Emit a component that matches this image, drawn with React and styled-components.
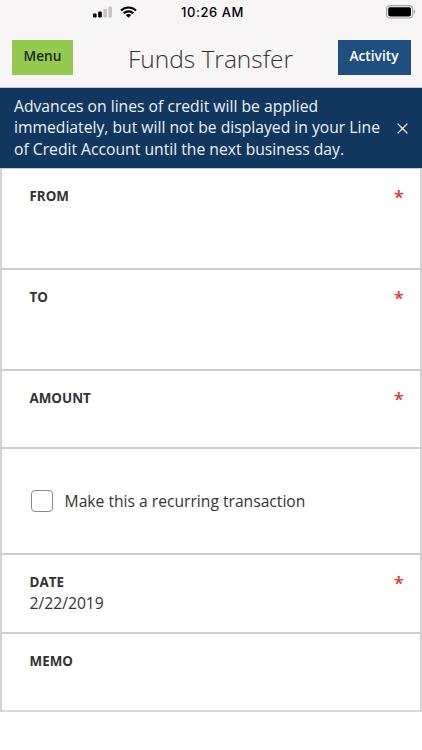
import React, { useState } from "react";
import styled, { createGlobalStyle, css } from "styled-components";

const FONT_STACK_BASE = '"Open Sans", "Noto Sans", sans-serif';
const FONT_STACK_SYSTEM = 'Inter, "Liberation Sans", sans-serif';
const COLOR_CHROME = "#f7f5f6";
const COLOR_GREEN = "#95c94f";
const COLOR_BLUE = "#1f4f80";
const COLOR_NAVY = "#12375f";
const COLOR_KEYLINE = "#cdcdcd";
const COLOR_TEXT = "#333333";
const COLOR_REQUIRED = "#e0392b";
const FONT_SIZE_BODY = "15.7px";

const FIELDS = [
  { label: "FROM", height: 101, required: true },
  { label: "TO", height: 101, required: true },
  { label: "AMOUNT", height: 78, required: true },
  { checkbox: "Make this a recurring transaction", height: 106 },
  { label: "DATE", value: "2/22/2019", height: 79, required: true },
  { label: "MEMO", height: 78 }
];

export default function App() {
  const [noticeOpen, setNoticeOpen] = useState(true);

  return (
    <Screen>
      <GlobalStyle />
      <StatusBar>
        <Signal>
          <SignalIcon />
          <WifiIcon />
        </Signal>
        <Clock>10:26 AM</Clock>
        <BatteryIcon />
      </StatusBar>
      <Header>
        <HeaderButton>Menu</HeaderButton>
        <Title>Funds Transfer</Title>
        <HeaderButton primary>Activity</HeaderButton>
      </Header>
      {noticeOpen && (
        <Notice>
          <NoticeText>
            Advances on lines of credit will be applied immediately, but will
            not be displayed in your Line of Credit Account until the next
            business day.
          </NoticeText>
          <Close aria-label="Close" onClick={() => setNoticeOpen(false)}>
            <CloseIcon />
          </Close>
        </Notice>
      )}
      <Form>
        {FIELDS.map(field =>
          field.checkbox ? (
            <CheckRow key={field.checkbox} height={field.height}>
              <Checkbox type="checkbox" />
              {field.checkbox}
            </CheckRow>
          ) : (
            <Field key={field.label} {...field} />
          )
        )}
      </Form>
    </Screen>
  );
}

/**
 * A labelled row of the form
 */
function Field({ label, value, height, required }) {
  return (
    <Row height={height}>
      <div>
        <Label>{label}</Label>
        {value && <Value>{value}</Value>}
      </div>
      {required && <Required>*</Required>}
    </Row>
  );
}

const SignalIcon = () => (
  <svg width="19" height="12" viewBox="0 0 19 12">
    <rect x="0" y="7.5" width="3.6" height="4" rx="1" fill="#000" />
    <rect x="5.2" y="5.5" width="3.6" height="6" rx="1" fill="#000" />
    <rect x="10.4" y="3" width="3.6" height="8.5" rx="1" fill="#c6c5c6" />
    <rect x="15.4" y="0.5" width="3.6" height="11" rx="1" fill="#c6c5c6" />
  </svg>
);

const WifiIcon = () => (
  <svg width="17" height="12" viewBox="0 0 17 12">
    <g fill="none" stroke="#000" strokeWidth="2.1">
      <path d="M1 4.6C5.2 0.5 11.8 0.5 16 4.6" />
      <path d="M3.7 7.3C6.4 4.7 10.6 4.7 13.3 7.3" />
    </g>
    <path d="M5.8 9C7.3 7.6 9.7 7.6 11.2 9L8.5 11.7Z" fill="#000" />
  </svg>
);

const BatteryIcon = () => (
  <svg width="30" height="14" viewBox="0 0 30 14">
    <rect
      x="0.6"
      y="0.6"
      width="26"
      height="12.4"
      rx="3.4"
      fill="none"
      stroke="#a3a2a3"
      strokeWidth="1.1"
    />
    <rect x="2.2" y="2.2" width="22.8" height="9.2" rx="1.8" fill="#000" />
    <path d="M28 4.8C29.5 5.4 29.5 8.2 28 8.8Z" fill="#8f8e8f" />
  </svg>
);

const CloseIcon = () => (
  <svg width="11" height="11" viewBox="0 0 11 11">
    <path
      d="M0.6 0.6L10.4 10.4M10.4 0.6L0.6 10.4"
      stroke="#fff"
      strokeWidth="1.3"
    />
  </svg>
);

const GlobalStyle = createGlobalStyle`
  * {
    box-sizing: border-box;
  }

  body {
    margin: 0;
    background: #fff;
  }
`;

const Screen = styled.main`
  height: 750px;
  overflow: hidden;
  background: #fff;
  color: ${COLOR_TEXT};
  font-family: ${FONT_STACK_BASE};
`;

const StatusBar = styled.div`
  display: grid;
  grid-template-columns: 88px 1fr auto;
  align-items: center;
  height: 24px;
  padding: 0 6px 0 93px;
  background: ${COLOR_CHROME};
`;

const Signal = styled.div`
  display: flex;
  gap: 8px;
`;

const Clock = styled.div`
  color: #000;
  font: 500 13px/24px ${FONT_STACK_SYSTEM};
  letter-spacing: 0.55px;
`;

const Header = styled.header`
  display: flex;
  align-items: flex-start;
  height: 64px;
  padding: 16px 11px 0 12px;
  border-bottom: 1px solid #c9cbd0;
  background: ${COLOR_CHROME};
`;

const HeaderButton = styled.button.withConfig({
  shouldForwardProp: prop => prop !== "primary"
})`
  width: 61px;
  height: 35px;
  padding: 0 0 3px;
  border: 0;
  background: ${COLOR_GREEN};
  color: #1c2a10;
  font: 600 13.7px/20px ${FONT_STACK_BASE};

  ${({ primary }) =>
    primary &&
    css`
      width: 73px;
      padding-right: 1px;
      background: ${COLOR_BLUE};
      color: #fff;
    `};
`;

const Title = styled.h1`
  flex: 1;
  margin: 0;
  padding-left: 10px;
  color: ${COLOR_TEXT};
  font-size: 24.5px;
  font-weight: 300;
  line-height: 37px;
  text-align: center;
`;

const Notice = styled.div`
  display: flex;
  justify-content: space-between;
  align-items: center;
  height: 80px;
  padding: 0 14px;
  background: ${COLOR_NAVY};
  color: #eaf1f8;
`;

const NoticeText = styled.p`
  width: 372px;
  margin: 0;
  font-size: ${FONT_SIZE_BODY};
  line-height: 21.3px;
`;

const Close = styled.button`
  display: flex;
  padding: 0;
  border: 0;
  background: none;
`;

const Form = styled.form`
  border: solid #d2d2d2;
  border-width: 1px 2px 0 2px;
  border-top-color: #c3ccd8;
`;

const Row = styled.section`
  display: flex;
  justify-content: space-between;
  height: ${({ height }) => height}px;
  padding: 16.5px 16px 0 27.5px;
  border-bottom: 2px solid ${COLOR_KEYLINE};

  &:last-child {
    border-bottom-color: #dcdcdc;
  }
`;

const CheckRow = styled.label`
  display: flex;
  align-items: center;
  gap: 12px;
  height: ${({ height }) => height}px;
  padding-left: 28.6px;
  border-bottom: 2px solid ${COLOR_KEYLINE};
  font-size: 15.65px;
`;

const Checkbox = styled.input`
  appearance: none;
  width: 22px;
  height: 22px;
  margin: 0;
  border: 1px solid #8a8a8a;
  border-radius: 4px;
  background: #fff;
`;

const Label = styled.div`
  font-size: 13.4px;
  font-weight: 700;
  line-height: 20px;
`;

const Value = styled.div`
  font-size: ${FONT_SIZE_BODY};
  line-height: 22px;
`;

const Required = styled.span`
  color: ${COLOR_REQUIRED};
  font-size: 18.5px;
  font-weight: 600;
  line-height: 22px;
`;
